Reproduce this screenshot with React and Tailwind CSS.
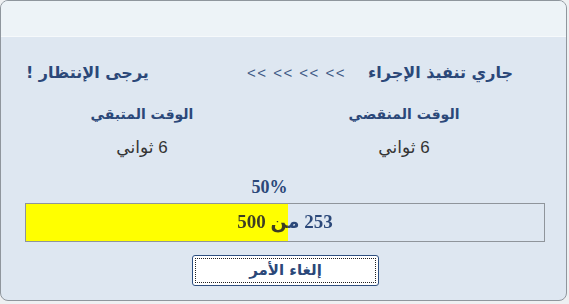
import React from 'react';

const navy = 'text-[#2b4879]';

export default function App() {
  const done = 253;
  const total = 500;
  const pct = (done / total) * 100;

  return (
    <div className="w-[569px] h-[304px] bg-[#eef0f2] overflow-hidden">
      <div
        dir="rtl"
        className="w-[567px] h-[301px] rounded-[8px] border border-[#8f969d] bg-[#dee7f1] overflow-hidden flex flex-col"
        style={{ fontFamily: "'DejaVu Sans', sans-serif" }}
      >
        {/* title bar */}
        <div className="h-[36px] shrink-0 bg-[#edf3f7] border-b border-[#f6f9fb]" />

        {/* header line */}
        <div className="flex items-center h-[36px] mt-[18px] pr-[53px] pl-[25px]">
          <span className={`text-[16px] font-bold ${navy}`}>جاري تنفيذ الإجراء</span>
          <span
            dir="ltr"
            className="mr-[22px] text-[15px] text-[#3f5a86] tracking-[1.5px]"
            style={{ fontFamily: "'Liberation Sans', sans-serif" }}
          >
            &lt;&lt; &lt;&lt; &lt;&lt; &lt;&lt;
          </span>
          <span className={`mr-auto text-[16px] font-bold ${navy}`}>يرجى الإنتظار !</span>
        </div>

        {/* times */}
        <div className="flex mt-[12px]">
          <div className="w-[324px] flex flex-col items-center">
            <span className={`text-[14px] font-bold ${navy} h-[22px] leading-[22px]`}>الوقت المنقضي</span>
            <span
              className="mt-[12px] text-[17px] text-[#333] leading-[22px]"
              style={{ fontFamily: "'Liberation Sans', 'DejaVu Sans', sans-serif" }}
            >
              6 ثواني
            </span>
          </div>
          <div className="w-[240px] flex flex-col items-center pl-[40px]">
            <span className={`text-[14px] font-bold ${navy} h-[22px] leading-[22px]`}>الوقت المتبقي</span>
            <span
              className="mt-[12px] text-[17px] text-[#333] leading-[22px]"
              style={{ fontFamily: "'Liberation Sans', 'DejaVu Sans', sans-serif" }}
            >
              6 ثواني
            </span>
          </div>
        </div>

        {/* percent */}
        <div
          className={`mt-[18px] h-[20px] flex justify-center pr-[28px] text-[18px] font-bold leading-[20px] ${navy}`}
          style={{ fontFamily: "'Liberation Serif', 'DejaVu Sans', serif" }}
        >
          50%
        </div>

        {/* progress bar */}
        <div className="mt-[6px] mr-[21px] ml-[24px] h-[39px] border border-[#8f959b] relative" dir="ltr">
          <div className="absolute inset-y-0 left-0 bg-[#ffff00]" style={{ width: `${pct}%` }} />
          <div
            dir="rtl"
            className="absolute inset-0 flex items-center justify-center text-[19px] font-bold bg-clip-text text-transparent"
            style={{
              fontFamily: "'Liberation Serif', 'DejaVu Sans', serif",
              backgroundImage: `linear-gradient(to right, #3d3d24 ${pct}%, #2b4879 ${pct}%)`,
            }}
          >
            {done} من {total}
          </div>
        </div>

        {/* cancel button */}
        <div className="flex justify-center mt-[13px] pl-[4px]">
          <button className="relative w-[187px] h-[31px] bg-white border border-[#2d4f80] rounded-[3px] flex items-center justify-center">
            <span className="absolute inset-[2px] border border-dotted border-[#222]" />
            <span className={`text-[15px] font-bold ${navy}`}>إلغاء الأمر</span>
          </button>
        </div>
      </div>
    </div>
  );
}
